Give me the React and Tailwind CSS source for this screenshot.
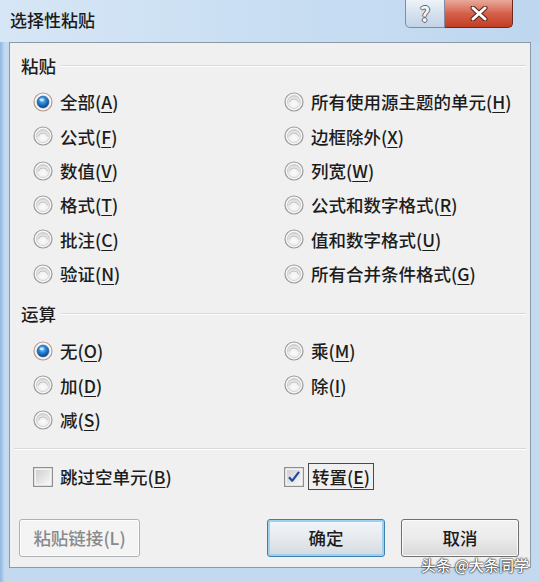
import React from "react";

const FONT = "font-['Noto_Sans_CJK_SC','Noto_Sans',sans-serif]";

// access-key label: "全部(" + underlined key + ")"
function Label({ text, k, plain }) {
    if (plain) return <span>{text}({k})</span>;
    return (
        <span>
            {text}(<span className="underline underline-offset-[3px] decoration-1">{k}</span>)
        </span>
    );
}

function Radio({ checked }) {
    return (
        <svg width="20" height="20" viewBox="0 0 20 20" className="shrink-0">
            <defs>
                <radialGradient id="rOff" cx="50%" cy="65%" r="60%">
                    <stop offset="0" stopColor="#fbfbfb" />
                    <stop offset="0.7" stopColor="#eeeeee" />
                    <stop offset="1" stopColor="#cfcfcf" />
                </radialGradient>
                <radialGradient id="rOn" cx="45%" cy="35%" r="65%">
                    <stop offset="0" stopColor="#8fd0ff" />
                    <stop offset="0.45" stopColor="#2a86d6" />
                    <stop offset="1" stopColor="#0b3f82" />
                </radialGradient>
            </defs>
            <circle cx="10" cy="10" r="9" fill="#f6f6f6" stroke={checked ? "#b89a8e" : "#9a9a9a"} strokeWidth="1.2" />
            {checked ? (
                <>
                    <circle cx="10" cy="10" r="6" fill="url(#rOn)" stroke="#1c5a9e" strokeWidth="0.6" />
                    <ellipse cx="8.6" cy="7.8" rx="2.2" ry="1.4" fill="#d9f0ff" opacity="0.85" />
                </>
            ) : (
                <>
                    <circle cx="10" cy="10" r="6.5" fill="url(#rOff)" stroke="#c9c9c9" strokeWidth="0.8" />
                    <path d="M5.2 10.5 A5 5 0 0 1 14.8 10.5" fill="none" stroke="#b8b8b8" strokeWidth="0.9" />
                </>
            )}
        </svg>
    );
}

function Checkbox({ checked }) {
    return (
        <svg width="20" height="20" viewBox="0 0 20 20" className="shrink-0">
            <defs>
                <linearGradient id="cb" x1="0" y1="0" x2="1" y2="1">
                    <stop offset="0" stopColor="#cfcfcf" />
                    <stop offset="1" stopColor="#f7f7f7" />
                </linearGradient>
            </defs>
            <rect x="0.6" y="0.6" width="18.8" height="18.8" fill="#f4f4f4" stroke="#8e8f8f" strokeWidth="1.2" />
            <rect x="3" y="3" width="14" height="14" fill="url(#cb)" />
            {checked && (
                <path d="M5 10.2 L8.2 13.8 L15 4.8" fill="none" stroke="#1d4aa3" strokeWidth="2.2" strokeLinejoin="round" />
            )}
        </svg>
    );
}

function Option({ label, k, checked }) {
    return (
        <div className="flex items-center gap-[7px] h-[34.33px]">
            <Radio checked={checked} />
            <Label text={label} k={k} />
        </div>
    );
}

function SectionHead({ title }) {
    return (
        <div className="flex items-center h-[28px] pl-[11px] pr-[4px] gap-[5px]">
            <span>{title}</span>
            <div className="flex-1 border-t border-[#d9d9d9] border-b border-b-white" />
        </div>
    );
}

function Button({ children, kind }) {
    const base = "flex items-center justify-center h-[38px] w-[118px] rounded-[3px] border";
    if (kind === "disabled")
        return (
            <div className={`${base} w-[121px] border-[#adb2b5] bg-[#f4f4f4] text-[#8a8a8a] shadow-[inset_0_0_0_1px_#fcfcfc]`}>
                {children}
            </div>
        );
    if (kind === "default")
        return (
            <div className={`${base} border-[#3c7fb1] bg-gradient-to-b from-[#f3f6f8] via-[#e6eaee] to-[#d3dadf] shadow-[inset_0_0_0_2px_#9fd1ee]`}>
                {children}
            </div>
        );
    return (
        <div className={`${base} border-[#707070] bg-gradient-to-b from-[#f2f2f2] via-[#ebebeb] to-[#d8d8d8] shadow-[inset_0_0_0_1px_#fbfbfb]`}>
            {children}
        </div>
    );
}

export default function App() {
    const paste = [
        ["全部", "A", true, "所有使用源主题的单元", "H"],
        ["公式", "F", false, "边框除外", "X"],
        ["数值", "V", false, "列宽", "W"],
        ["格式", "T", false, "公式和数字格式", "R"],
        ["批注", "C", false, "值和数字格式", "U"],
        ["验证", "N", false, "所有合并条件格式", "G"],
    ];

    return (
        <div className={`${FONT} relative w-[540px] h-[582px] overflow-hidden bg-[#c2d9f0] text-[17.5px] font-medium leading-none text-[#1c1c1c]`}>
            {/* title bar */}
            <div className="flex h-[42px] bg-gradient-to-r from-[#d6e6f5] via-[#c9def3] to-[#bed7ef]">
                <div className="pl-[10px] pt-[11px] text-[17px] text-[#1a1a1a]">选择性粘贴</div>
                <div className="ml-auto mr-[27px] flex h-[28px]">
                    <div className="flex w-[40px] items-center justify-center rounded-bl-[5px] border border-t-0 border-[#7d8ea2] bg-gradient-to-b from-[#eef3f9] via-[#d5e1ee] to-[#c3d3e6]">
                        <span className="text-[20px] font-bold text-[#f7f7f7] [text-shadow:1px_0_0_#5a6573,-1px_0_0_#5a6573,0_1px_0_#5a6573,0_-1px_0_#5a6573]">?</span>
                    </div>
                    <div className="flex w-[68px] items-center justify-center rounded-br-[5px] border border-t-0 border-l-0 border-[#6b2a20] bg-gradient-to-b from-[#e9a99b] via-[#d4604a] to-[#c23c21]">
                        <svg width="18" height="15" viewBox="0 0 18 15">
                            <path d="M3 2 L15 13 M15 2 L3 13" stroke="#5a2016" strokeWidth="5" strokeLinecap="round" />
                            <path d="M3 2 L15 13 M15 2 L3 13" stroke="#ffffff" strokeWidth="3" strokeLinecap="round" />
                        </svg>
                    </div>
                </div>
            </div>

            {/* frame left highlight */}
            <div className="absolute left-0 top-[42px] h-[540px] w-[4px] bg-gradient-to-r from-[#8fb6df] to-[#b9d4ee]" />

            {/* content panel */}
            <div className="ml-[9px] flex h-[526px] w-[522px] flex-col border border-[#8c9aa8] bg-[#f0f0f0] pt-[9px]">
                <SectionHead title="粘贴" />
                <div className="mt-[5px] grid grid-cols-[251px_1fr] pl-[23px]">
                    {paste.map(([a, ak, chk, b, bk]) => (
                        <React.Fragment key={ak}>
                            <Option label={a} k={ak} checked={chk} />
                            <Option label={b} k={bk} />
                        </React.Fragment>
                    ))}
                </div>

                <div className="mt-[9px]">
                    <SectionHead title="运算" />
                </div>
                <div className="mt-[6px] grid grid-cols-[251px_1fr] pl-[23px]">
                    <Option label="无" k="O" checked />
                    <Option label="乘" k="M" />
                    <Option label="加" k="D" />
                    <Option label="除" k="I" />
                    <Option label="减" k="S" />
                    <div />
                </div>

                <div className="mx-[4px] mt-[11px] border-t border-[#d9d9d9] border-b border-b-white" />

                <div className="mt-[10px] grid h-[34px] grid-cols-[251px_1fr] items-center pl-[23px]">
                    <div className="flex items-center gap-[7px]">
                        <Checkbox />
                        <Label text="跳过空单元" k="B" />
                    </div>
                    <div className="flex items-center gap-[4px]">
                        <Checkbox checked />
                        <span className="flex h-[27px] items-center border border-[#4a4a4a] px-[3px]">
                            <Label text="转置" k="E" />
                        </span>
                    </div>
                </div>

                <div className="mt-[25px] flex pl-[9px]">
                    <Button kind="disabled">
                        <Label text="粘贴链接" k="L" plain />
                    </Button>
                    <div className="ml-[127px]">
                        <Button kind="default">确定</Button>
                    </div>
                    <div className="ml-[16px]">
                        <Button>取消</Button>
                    </div>
                </div>
            </div>

            {/* watermark */}
            <div className="absolute right-[11px] bottom-[10px] text-[15px] text-white [text-shadow:0_0_2px_#000,0_0_1px_#000]">
                头条 @大条同学
            </div>
        </div>
    );
}
